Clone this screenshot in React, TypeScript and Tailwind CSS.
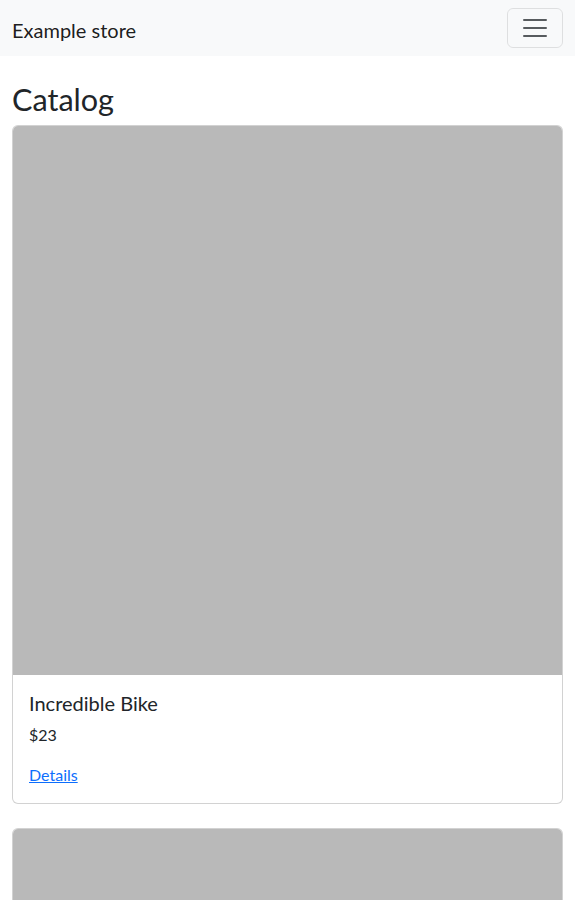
import React from "react";

function Card({ title, price }: { title: string; price: string }) {
  return (
    <div className="flex flex-col rounded-md border border-[rgba(0,0,0,0.175)] bg-white">
      <div className="aspect-square w-full rounded-t-[5px] bg-[#b9b9b9]" />
      <div className="p-4">
        <h5 className="mb-2 text-[20px] leading-[1.2] font-normal">{title}</h5>
        <p className="mb-4 text-[16px] leading-6">{price}</p>
        <a href="#" className="text-[16px] leading-6 text-[#0d6efd] underline">
          Details
        </a>
      </div>
    </div>
  );
}

export default function App() {
  return (
    <div
      className="min-h-[900px] bg-white text-[#212529]"
      style={{ fontFamily: 'Lato, "Noto Sans", sans-serif' }}
    >
      <nav className="flex h-14 items-center justify-between bg-[#f8f9fa] px-3 py-2">
        <a href="#" className="pt-1 text-[20px] leading-[30px] text-[rgba(0,0,0,0.9)]">
          Example store
        </a>
        <button className="flex h-10 w-14 items-center justify-center rounded-md border border-[rgba(0,0,0,0.1)]">
          <svg width="30" height="30" viewBox="0 0 30 30">
            <path
              d="M4 7h22M4 15h22M4 23h22"
              stroke="rgba(33,37,41,0.75)"
              strokeWidth="2"
              strokeLinecap="round"
              strokeMiterlimit="10"
              fill="none"
            />
          </svg>
        </button>
      </nav>
      <main className="px-3 pt-[26px]">
        <h1 className="mb-[6px] text-[30.6px] leading-[1.2] font-normal">Catalog</h1>
        <div className="flex flex-col gap-6">
          <Card title="Incredible Bike" price="$23" />
          <Card title="Incredible Bike" price="$23" />
        </div>
      </main>
    </div>
  );
}
